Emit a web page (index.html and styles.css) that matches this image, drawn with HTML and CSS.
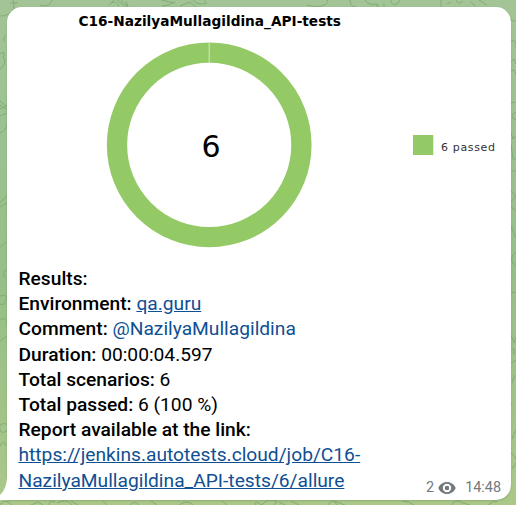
FILE: index.html
```html
<!DOCTYPE html>
<html lang="en">
<head>
<meta charset="utf-8">
<title>Test report</title>
<link rel="stylesheet" href="styles.css">
</head>
<body>
<svg class="wallpaper" width="516" height="505" viewBox="0 0 516 505" aria-hidden="true">
  <path d="M13 0q3 10-3 13q-5 4-10 3M10 3h8M52 0q-2 8-12 5M109 5l5-5M111 3q5-3 8 3M117 0l9 7M121 0l7 7M126 1l2 6M161 0l14 3M162 6q6 0 13-4M180 6l10-4l6 5M193 0q5 6 14 3l-3-3M307 5q12 3 17 0q5-2 3-5M350 0q0 7 6 7M365 0q4 6 12 4v3M378 4v3M384 3v4M391 0q0 6 6 4l3-4M441 0v7M447 4l4-2M456 0q3 6 7 1M471 2l4 4M479 0l8 5"/>
  <path d="M6 35q-4 3-1 7M0 53q2 2 3-1q3 3 0 5q5 6-3 12M0 101l7 6M0 105l7 5M0 109l7-3M0 116l7-3M7 123q0 7-7 10M0 203l7-8M0 207l7-4M0 247l6-5M7 270q-6 2-2 8M0 296q9-3 6 5q-2 5-6 3M0 320q8-5 7 6M0 341l7-5M7 424q-9-2-7 6q3 5 7 0M0 446q4-8 6 0"/>
  <path d="M511 19q2 4 5 2M511 40l5 2v6M511 62l3-3l2 5M511 71q4-3 5 4M511 103l5-1M516 112q-8 5 0 8M511 133l2 6l3-3M511 144l2 15h3M511 171h5M511 191l5 5M511 202l5-6M511 207l5 4M511 226l5 12M516 252q-9 7 0 14M511 293l5-1M511 335l3 8l2-6M511 349h3v6M511 363l5-3M512 383l3-8M511 405v-3M516 430l-4 9M511 453q8 6 5 14M512 469l4-6"/>
  <path d="M0 505q4-8 12 0M31 505l7-3l5 3M49 505q0-5 6-3M57 503q10-5 15 2M78 505l-7-4M103 501l4 4M130 505q4-5 9 0M151 501l6 4M179 505q8-6 14 0M222 501l5 4M262 505l-6-3q-2 2 0 3M262 505q6-8 15-4l-3 4M279 502l6 3M291 501l8 4M328 505q3-6 9-3l8 3M337 505l-2-3M402 501q7 0 12 4M451 505q5-7 12-2l7 2M488 505q4-4 9-4"/>
</svg>
<article class="message">
  <svg class="tail" width="12" height="22" viewBox="0 0 12 22" aria-hidden="true"><path d="M7 0Q6 12 0 17V22H12V0Z"/></svg>
  <svg class="chart" width="504" height="252" viewBox="7 7 504 252">
    <text class="chart-title" x="78.5" y="26" textLength="262.5" lengthAdjust="spacingAndGlyphs">C16-NazilyaMullagildina_API-tests</text>
    <circle class="ring" cx="209.2" cy="144.9" r="92.2"/>
    <path class="divider" d="M209.200 42.500V63"/>
    <text class="total" x="211" y="157">6</text>
    <rect class="swatch" x="413" y="135" width="20.3" height="20"/>
    <text class="legend" x="441" y="150.5" textLength="54">6 passed</text>
  </svg>
  <div class="report">
    <div><b>Results:</b></div>
    <div><b>Environment:</b> <a class="link">qa.guru</a></div>
    <div><b>Comment:</b> <a class="mention">@NazilyaMullagildina</a></div>
    <div><b>Duration:</b> 00:00:04.597</div>
    <div><b>Total scenarios:</b> 6</div>
    <div><b>Total passed:</b> 6 (100 %)</div>
    <div><b>Report available at the link:</b></div>
    <div><a class="link">https://jenkins.autotests.cloud/job/C16-<br>NazilyaMullagildina_API-tests/6/allure</a></div>
  </div>
  <footer class="meta">
    <span>2</span>
    <svg class="eye" width="18" height="12" viewBox="0 0 18 12"><path fill-rule="evenodd" d="M9 0C5 0 1.700 2.400.3 6C1.700 9.600 5 12 9 12s7.300-2.400 8.700-6C16.300 2.400 13 0 9 0ZM9 1.800a4.200 4.200 0 1 1 0 8.400a4.200 4.200 0 0 1 0-8.400ZM9 3.700a2.300 2.300 0 1 0 0 4.600a2.300 2.300 0 0 0 0-4.600Z"/></svg>
    <time>14:48</time>
  </footer>
</article>
</body>
</html>
```
FILE: styles.css
```css
body {
  margin: 0;
  width: 516px;
  height: 505px;
  overflow: hidden;
  box-sizing: border-box;
  padding: 7px 5px 5px 7px;
  background: linear-gradient(180deg, #a3c496 0%, #9bc190 30%, #96bf87 55%, #a1c388 80%, #abc888 100%);
  font-family: Roboto, sans-serif;
}
.wallpaper {
  position: absolute;
  inset: 0;
  fill: none;
  stroke: #82ad76;
  stroke-width: 1;
}
.message {
  position: relative;
  height: 493px;
  background: #fff;
  border-radius: 15px 15px 15px 0;
  box-shadow: 0 1px 2px rgba(70, 100, 60, .25);
}
.tail {
  position: absolute;
  left: -7px;
  bottom: 0;
  fill: #fff;
}
.chart {
  display: block;
}
.chart-title {
  font: bold 13.3px "DejaVu Sans", sans-serif;
}
.ring {
  fill: none;
  stroke: #94ca66;
  stroke-width: 20.3;
}
.divider {
  stroke: #d5eac5;
  stroke-width: 1;
}
.total {
  font: 30px "DejaVu Sans", sans-serif;
  text-anchor: middle;
}
.swatch {
  fill: #94ca66;
}
.legend {
  font: 11px "DejaVu Sans", sans-serif;
  fill: #333;
}
.report {
  padding: 7px 12px 0 11.5px;
  font-size: 19.2px;
  line-height: 25.2px;
  color: #000;
}
.report b {
  font-weight: 500;
}
.link,
.mention {
  color: #0f4f93;
}
.link {
  text-decoration: underline;
}
.meta {
  position: absolute;
  right: 10px;
  bottom: 2px;
  display: flex;
  align-items: center;
  font-size: 14.4px;
  line-height: 20px;
  color: #74797d;
}
.eye {
  margin: 0 9px 0 4px;
  fill: #74797d;
}
```
